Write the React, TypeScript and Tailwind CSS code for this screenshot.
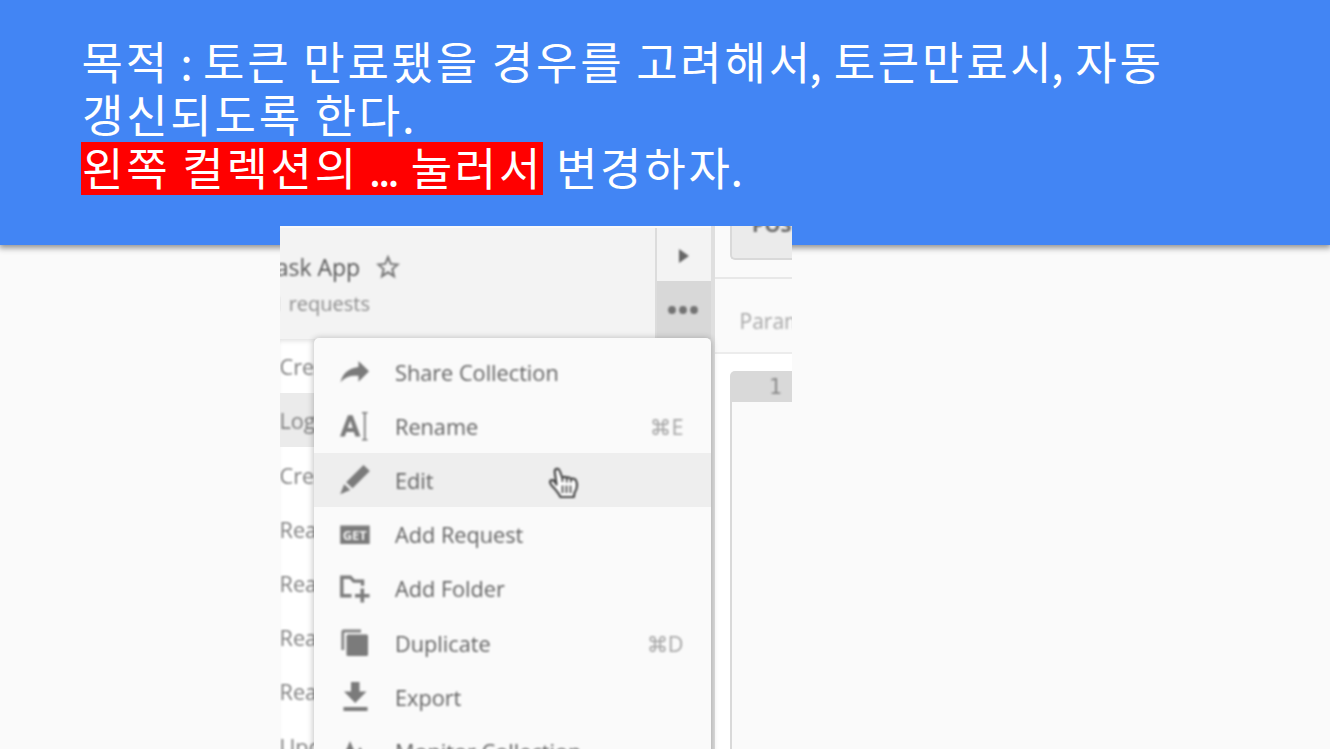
import type { ReactNode } from "react";

const soft = "[filter:blur(0.8px)]";

type MenuItem = { label: string; icon: ReactNode; shortcut?: string; active?: boolean };

const ShareIcon = () => (
  <svg width="32" height="32" viewBox="0 0 32 32" fill="#7b7b7b">
    <path d="M19.5 5 30 15.2 19.5 25.8v-6C11 19.5 6 21 1.500 26.500 3.500 17.500 9 12.500 19.500 11z" />
  </svg>
);

const RenameIcon = () => (
  <svg width="32" height="32" viewBox="0 0 32 32" fill="#7b7b7b">
    <path fillRule="evenodd" d="M1 26.500 9 5.200h4.600L21.500 26.500h-5l-1.600-4.400H7.400l-1.600 4.400zM8.800 18h4.900L11.300 10.800z" />
    <path d="M23 2h5.500v1.500h-1.900v25.500h1.900v1.500H23V29h1.900V3.500H23z" />
  </svg>
);

const EditIcon = () => (
  <svg width="32" height="32" viewBox="0 0 32 32" fill="#7b7b7b">
    <path d="M24.500 1 30.800 7 13.500 24.200 7.200 18.200z" />
    <path d="M5.200 20.300 11.300 26 1.200 30.200z" />
  </svg>
);

const RequestIcon = () => (
  <svg width="32" height="32" viewBox="0 0 32 32">
    <rect x="1.200" y="6.500" width="29.500" height="18.500" fill="#7b7b7b" />
    <text x="15.800" y="20.800" textAnchor="middle" fill="#f4f4f4" fontFamily="Open Sans, sans-serif" fontWeight="700" fontSize="13">
      GET
    </text>
  </svg>
);

const FolderIcon = () => (
  <svg width="32" height="32" viewBox="0 0 32 32" fill="none" stroke="#7b7b7b" strokeWidth="3.400">
    <path d="M12.500 22.800H2.800V4.200h8.500l3.500 3.900h8.700v4.700" />
    <path d="M23.300 15.500v14M16 22.800h14.500" strokeWidth="3.600" />
  </svg>
);

const DuplicateIcon = () => (
  <svg width="32" height="32" viewBox="0 0 32 32">
    <path d="M3.800 23V5q0-1 1-1H22" fill="none" stroke="#848484" strokeWidth="2.800" />
    <rect x="7.500" y="7.500" width="21.500" height="21.500" rx="1.500" fill="#7b7b7b" />
  </svg>
);

const ExportIcon = () => (
  <svg width="32" height="32" viewBox="0 0 32 32" fill="#7b7b7b">
    <path d="M12 1h8.500v9.500H27.500L16.200 22 5 10.500h7zM4.500 26h24v4h-24z" />
  </svg>
);

const MonitorIcon = () => (
  <svg width="32" height="32" viewBox="0 0 32 32" fill="#7b7b7b">
    <path d="M1 19h4.500L11 6l6 14 4-8 4.500 7H31v4h-8l-2-3-5 9-5.500-14L8 23H1z" />
  </svg>
);

const items: MenuItem[] = [
  { label: "Share Collection", icon: <ShareIcon /> },
  { label: "Rename", icon: <RenameIcon />, shortcut: "E" },
  { label: "Edit", icon: <EditIcon />, active: true },
  { label: "Add Request", icon: <RequestIcon /> },
  { label: "Add Folder", icon: <FolderIcon /> },
  { label: "Duplicate", icon: <DuplicateIcon />, shortcut: "D" },
  { label: "Export", icon: <ExportIcon /> },
  { label: "Monitor Collection", icon: <MonitorIcon /> },
];

const requests = ["Create", "Login", "Create", "Read", "Read", "Read", "Read", "Update"];

function CommandKey() {
  return (
    <svg width="17" height="18" viewBox="0 0 18 18" fill="none" stroke="#a6a6a6" strokeWidth="1.800">
      <path d="M6.300 6.300H3.800A2.500 2.500 0 1 1 6.300 3.800v10.400a2.500 2.500 0 1 1-2.500-2.500h10.400a2.500 2.500 0 1 1-2.500 2.500V3.800a2.500 2.500 0 1 1 2.500 2.500z" />
    </svg>
  );
}

function Menu() {
  return (
    <div className="absolute left-[33.500px] top-[111.500px] h-[440px] w-[397px] rounded-t-[5px] bg-[#fafafa] pt-[7px] shadow-[0_1px_6px_1px_rgba(0,0,0,0.24)]">
      {items.map((item) => (
        <div
          key={item.label}
          className={`flex h-[54.200px] items-center pl-[25px] pr-[27px] ${item.active ? "bg-[#eeeeee]" : ""}`}
        >
          <div className={`${soft} w-[56.500px] pt-px`}>{item.icon}</div>
          <span className={`${soft} flex-1 whitespace-nowrap pt-[2px] text-[21.700px] leading-none text-[#616161]`}>{item.label}</span>
          {item.shortcut && (
            <span className={`${soft} flex items-center gap-[2px] pt-[2px] text-[21.700px] leading-none text-[#a3a3a3]`}>
              <CommandKey />
              {item.shortcut}
            </span>
          )}
        </div>
      ))}
    </div>
  );
}

function Cursor() {
  return (
    <svg className={`${soft} absolute left-[268px] top-[240px]`} width="32" height="34" viewBox="0 0 32 34">
      <path
        d="M8.500 18.500 6.800 6.500C6.300 2.600 10.600 1.300 11.800 5l2.500 7c1-1.600 3.700-1.500 4.400.2 1.200-1.200 3.500-.9 4.100.9 2-.9 4.300-.3 5.200 1.500 2 4.500.8 8.700-1.500 12.200l-.7 4.200H12.500c-2-4.200-5.200-7.800-8.600-11.300-3-3.200-2-6 .6-5.600 1.500.2 3 2.300 4 4.400z"
        fill="#ffffff"
        stroke="#444444"
        strokeWidth="2.200"
        strokeLinejoin="round"
      />
      <path d="M14.400 11v5M18.800 12v4.500M22.900 13v3.500M14.500 19.500v7.500M18.500 19.500v7.500M22.500 19.500v7.500" stroke="#444444" strokeWidth="1.700" />
    </svg>
  );
}

function Sidebar() {
  return (
    <div className="flex w-[431px] shrink-0 flex-col">
      <div className="flex h-[113px] shrink-0 border-t-2 border-[#f9f9f9] bg-[#f3f3f3]">
        <div className="flex-1 overflow-hidden pt-[26px]">
          <div className={`${soft} -ml-[17px] flex h-[27px] items-center text-[23px] leading-none text-[#575757]`}>
            <span className="whitespace-nowrap">Task App</span>
            <svg className="-mt-[2px] ml-[16px]" width="24" height="24" viewBox="0 0 24 24" fill="none" stroke="#767676" strokeWidth="2">
              <path d="m12 2.200 2.700 6.700 7 .6-5.400 4.600 1.700 7.100-6-3.900-6 3.900 1.700-7.100-5.400-4.600 7-.6z" />
            </svg>
          </div>
          <div className={`${soft} -ml-[8px] mt-[13px] whitespace-nowrap text-[20px] leading-none text-[#8c8c8c]`}>1 requests</div>
        </div>
        <div className="flex w-[56px] flex-col border-l-2 border-[#dcdcdc]">
          <div className="flex h-[53px] items-center justify-center pt-[2px]">
            <svg className={soft} width="10" height="14" viewBox="0 0 10 14"><path d="M0 0 10 7 0 14z" fill="#666666" /></svg>
          </div>
          <div className="flex flex-1 items-center justify-center bg-[#d8d8d8]">
            <svg className={`${soft} -ml-[2px]`} width="32" height="8" viewBox="0 0 32 8" fill="#727272"><circle cx="5" cy="4" r="3.900" /><circle cx="16" cy="4" r="3.900" /><circle cx="27" cy="4" r="3.900" /></svg>
          </div>
        </div>
      </div>
      <div className="flex flex-col bg-white shadow-[inset_0_4px_5px_-2px_rgba(0,0,0,0.12)]">
        {requests.map((name, i) => (
          <div key={i} className={`flex h-[54.200px] shrink-0 items-center ${i === 1 ? "bg-[#ebebeb]" : ""}`}>
            <span className={`${soft} -ml-[0.500px] pt-[2px] text-[21.700px] leading-none text-[#7e7e7e]`}>{name}</span>
          </div>
        ))}
      </div>
    </div>
  );
}

function RequestPane() {
  return (
    <div className="flex w-[81px] shrink-0 flex-col overflow-hidden border-l-4 border-[#dfdfdf] bg-white">
      <div className="h-[53px] border-b-2 border-[#e8e8e8] bg-[#fafafa] pl-[15px]">
        <div className="h-[33.500px] w-[100px] overflow-hidden rounded-bl-[5px] border-b-2 border-l-2 border-[#d9d9d9] bg-[#ebebeb] pl-[20px]">
          <div className={`${soft} -mt-[12px] text-[20px] font-bold leading-[22px] text-[#666666]`}>POST</div>
        </div>
      </div>
      <div className="flex h-[75px] items-center border-b-2 border-[#ececec] bg-[#fafafa] pl-[24.500px] pt-[11px]">
        <span className={`${soft} text-[21px] leading-none text-[#a6a6a6]`}>Params</span>
      </div>
      <div className="flex flex-1 flex-col pl-[15px] pt-[17px]">
        <div className="flex-1 rounded-tl-[5px] border-l-2 border-t border-[#d9d9d9] bg-[#fafafa]">
          <div className="flex h-[30px] items-center bg-[#d9d9d9] pl-[37px] font-['DejaVu_Sans_Mono',monospace]">
            <span className={`${soft} text-[21px] leading-none text-[#8a8a8a]`}>1</span>
          </div>
        </div>
      </div>
    </div>
  );
}

function Comma() {
  return <span className="-ml-[3.500px] tracking-[-0.100px]">,</span>;
}

export default function App() {
  return (
    <div className="flex h-[749px] w-[1330px] flex-col overflow-hidden bg-[#fafafa]">
      <header className="h-[245px] shrink-0 bg-[#4285f4] pl-[81px] pt-[36px] shadow-[0_2px_6px_1px_rgba(0,0,0,0.42)]">
        <h1 className="whitespace-pre font-['Noto_Sans_CJK_KR',sans-serif] text-[45px] font-normal leading-[53px] tracking-[2.760px] text-white [word-spacing:-0.94px]">
          <div className="-mt-[2px] pl-[0.500px]">
            목적 <span className="-ml-[1.500px] tracking-[-1.600px]">:</span> 토큰 만료됐을 경우를 고려해서<Comma /> 토큰만료시<Comma /> 자동
          </div>
          <div className="pl-px">갱신되도록 한다<span className="-ml-px">.</span></div>
          <div className="flex">
            <span className="mt-[2px] h-[53px] w-[462px] bg-[#ff0000] pl-px leading-[49px]">
              왼쪽 컬렉션의 <span className="-ml-[2px] mr-[2.400px] tracking-[-3.300px]">...</span> 눌러서
            </span>
            <span className="pl-px"> 변경하자<span className="-ml-[2px]">.</span></span>
          </div>
        </h1>
      </header>
      <section className="relative -mt-[19px] ml-[280px] flex h-[523px] w-[512px] shrink-0 overflow-hidden bg-[#fafafa] font-['Open_Sans',sans-serif]">
        <Sidebar />
        <RequestPane />
        <Menu />
        <Cursor />
      </section>
    </div>
  );
}
